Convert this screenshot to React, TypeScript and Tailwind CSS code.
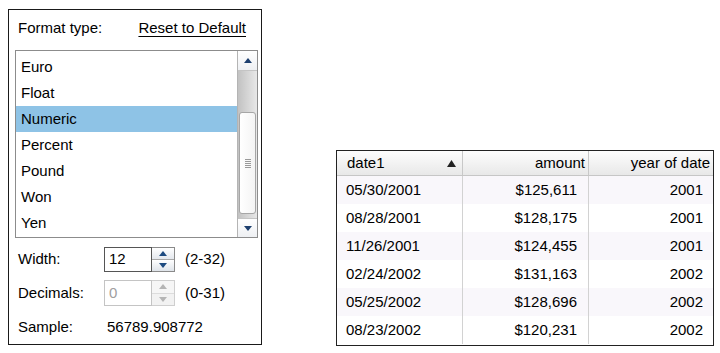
import { ReactNode } from 'react';

const formats = ['Euro', 'Float', 'Numeric', 'Percent', 'Pound', 'Won', 'Yen'];

const rows = [
  { date: '05/30/2001', amount: '$125,611', year: '2001' },
  { date: '08/28/2001', amount: '$128,175', year: '2001' },
  { date: '11/26/2001', amount: '$124,455', year: '2001' },
  { date: '02/24/2002', amount: '$131,163', year: '2002' },
  { date: '05/25/2002', amount: '$128,696', year: '2002' },
  { date: '08/23/2002', amount: '$120,231', year: '2002' },
];

function Tri({ up, color = '#1d3f6e' }: { up?: boolean; color?: string }) {
  return (
    <svg width="8" height="5" viewBox="0 0 8 5">
      <polygon points={up ? '0,5 4,0 8,5' : '0,0 8,0 4,5'} fill={color} />
    </svg>
  );
}

function Spinner({ value, disabled }: { value: string; disabled?: boolean }) {
  const tri = disabled ? '#b5b5b5' : '#1d4a80';
  return (
    <div className="flex h-full">
      <div
        className={`w-[48px] h-full border flex items-center pl-[4px] bg-white ${
          disabled ? 'border-[#c4c4c4] text-[#a0a0a0]' : 'border-[#555] text-black'
        }`}
      >
        {value}
      </div>
      <div
        className={`w-[23px] h-full border border-l-0 flex flex-col ${
          disabled ? 'border-[#cfcfcf]' : 'border-[#8a8a8a]'
        }`}
      >
        <div
          className={`flex-1 flex items-center justify-center border-b ${
            disabled ? 'bg-[#f6f6f6] border-[#dcdcdc]' : 'bg-gradient-to-b from-white to-[#e4e8ee] border-[#a8a8a8]'
          }`}
        >
          <Tri up color={tri} />
        </div>
        <div
          className={`flex-1 flex items-center justify-center ${
            disabled ? 'bg-[#f2f2f2]' : 'bg-gradient-to-b from-white to-[#dfe4ea]'
          }`}
        >
          <Tri color={tri} />
        </div>
      </div>
    </div>
  );
}

function FieldRow({ label, children, className }: { label: string; children: ReactNode; className: string }) {
  return (
    <div className={`flex items-center ${className}`}>
      <div className="w-[89px] pl-[3px]">{label}</div>
      {children}
    </div>
  );
}

function FormatPanel() {
  return (
    <div className="w-[254px] h-[336px] border border-[#1a1a1a] pl-[6px] pr-[3px] flex flex-col text-[15px] text-black">
      {/* Header */}
      <div className="h-[36px] flex items-center justify-between pl-[3px] pr-[12px]">
        <span>Format type:</span>
        <span className="underline underline-offset-[3px]">Reset to Default</span>
      </div>

      {/* List box */}
      <div className="mt-[4px] h-[188px] border border-[#8c8c8c] flex">
        <div className="flex-1 pt-[3px]">
          {formats.map((f) => (
            <div
              key={f}
              className={`h-[26px] flex items-center pl-[5px] ${f === 'Numeric' ? 'bg-[#8ec3e6]' : ''}`}
            >
              {f}
            </div>
          ))}
        </div>
        <div className="w-[20px] border-l border-[#b4b4b4] flex flex-col">
          <div className="h-[20px] flex items-center justify-center bg-gradient-to-b from-white to-[#eef0f3] border-b border-[#c4c4c4]">
            <Tri up />
          </div>
          <div className="flex-1 flex flex-col bg-gradient-to-r from-[#c2c2c2] to-[#e8e8e8] px-[1px]">
            <div className="h-[41px]" />
            <div className="h-[102px] rounded-[3px] border border-[#a6a6a6] bg-gradient-to-r from-white to-[#f4f4f4] flex flex-col items-center justify-center gap-[1px]">
              {[0, 1, 2, 3, 4].map((i) => (
                <div key={i} className="w-[6px] h-[1px] bg-[#9a9a9a]" />
              ))}
            </div>
            <div className="flex-1" />
          </div>
          <div className="h-[19px] flex items-center justify-center bg-gradient-to-b from-white to-[#eef0f3] border-t border-[#c4c4c4]">
            <Tri />
          </div>
        </div>
      </div>

      <FieldRow label="Width:" className="mt-[9px] h-[25px]">
        <Spinner value="12" />
        <span className="ml-[10px]">(2-32)</span>
      </FieldRow>

      <FieldRow label="Decimals:" className="mt-[8px] h-[26px]">
        <Spinner value="0" disabled />
        <span className="ml-[10px]">(0-31)</span>
      </FieldRow>

      <FieldRow label="Sample:" className="mt-[9px] h-[24px]">
        <span className="pl-[3px]">56789.908772</span>
      </FieldRow>
    </div>
  );
}

function DataTable() {
  return (
    <div className="ml-[74px] mt-[141px] w-[378px] h-[196px] border border-[#222] bg-white text-[15px] text-black">
      <div className="h-[25px] grid grid-cols-[126px_126px_1fr] bg-gradient-to-b from-[#fdfdfd] to-[#e8e8e8] border-b border-[#c6c6c6]">
        <div className="flex items-center justify-between pl-[10px] pr-[6px] border-r border-[#c8c8c8]">
          <span>date1</span>
          <svg width="9" height="7" viewBox="0 0 9 7">
            <polygon points="0,7 4.5,0 9,7" fill="#222" />
          </svg>
        </div>
        <div className="flex items-center justify-end pr-[3px] border-r border-[#c8c8c8]">amount</div>
        <div className="flex items-center justify-end pr-[3px]">year of date</div>
      </div>
      {rows.map((r, i) => (
        <div
          key={r.date}
          className={`h-[28px] grid grid-cols-[126px_126px_1fr] ${i % 2 === 0 ? 'bg-[#f9f7fb]' : 'bg-white'}`}
        >
          <div className="flex items-center pl-[9px] border-r border-[#d2d2d2]">{r.date}</div>
          <div className="flex items-center justify-end pr-[11px] border-r border-[#d2d2d2]">{r.amount}</div>
          <div className="flex items-center justify-end pr-[10px]">{r.year}</div>
        </div>
      ))}
    </div>
  );
}

export default function App() {
  return (
    <div className="w-[720px] h-[353px] bg-white flex items-start pl-[8px] pt-[9px] font-['Liberation_Sans',Arial,sans-serif]">
      <FormatPanel />
      <DataTable />
    </div>
  );
}
